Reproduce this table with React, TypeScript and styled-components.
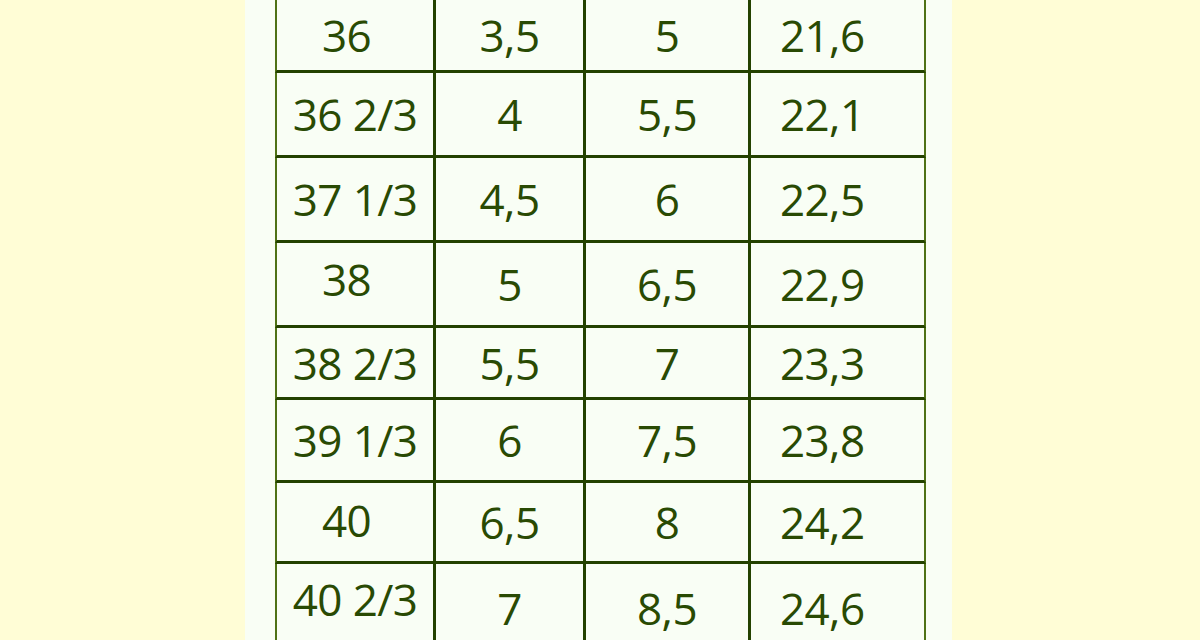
import React from "react";
import styled, { createGlobalStyle } from "styled-components";

const Global = createGlobalStyle`
  html, body { margin: 0; padding: 0; background: #fffdd6; }
  body { font-family: "Open Sans", "Noto Sans", sans-serif; }
`;

const Page = styled.div`
  height: 640px;
  overflow: hidden;
  display: flex;
  padding-left: 245px;
  box-sizing: border-box;
`;

const Sheet = styled.div`
  width: 707px;
  height: 640px;
  background: #f9fef5;
  padding-left: 30px;
  box-sizing: border-box;
`;

const Grid = styled.div`
  display: grid;
  grid-template-columns: 161px 150px 165px 175px;
  grid-template-rows: 73px 85px 85px 85px 72px 83px 81px 90px;
`;

const LINE = "#244200";
const EDGE = "#4f7216";

const Cell = styled.div<{ $col: number; $first?: boolean; $shift?: number; $lift?: number }>`
  box-sizing: border-box;
  display: flex;
  align-items: center;
  justify-content: ${(p) => (p.$col === 3 ? "flex-start" : "center")};
  padding-left: ${(p) => (p.$col === 3 ? "29px" : "0")};
  padding-right: ${(p) => (p.$shift ? `${p.$shift}px` : "0")};
  padding-bottom: ${(p) => (p.$lift ? `${p.$lift}px` : "0")};
  border-bottom: 3px solid ${LINE};
  border-right: ${(p) => (p.$col === 3 ? `2px solid ${EDGE}` : `3px solid ${LINE}`)};
  border-left: ${(p) => (p.$col === 0 ? `2px solid ${EDGE}` : "none")};
  color: #294a03;
  font-size: 44px;
  letter-spacing: -0.6px;
  line-height: 1;
  white-space: nowrap;
`;

type Row = { c: [string, string, string, string]; lift?: number };

const rows: Row[] = [
  { c: ["36", "3,5", "5", "21,6"] },
  { c: ["36 2/3", "4", "5,5", "22,1"] },
  { c: ["37 1/3", "4,5", "6", "22,5"] },
  { c: ["38", "5", "6,5", "22,9"], lift: 10 },
  { c: ["38 2/3", "5,5", "7", "23,3"] },
  { c: ["39 1/3", "6", "7,5", "23,8"] },
  { c: ["40", "6,5", "8", "24,2"], lift: 4 },
  { c: ["40 2/3", "7", "8,5", "24,6"], lift: 18 },
];

export default function App() {
  return (
    <>
      <Global />
      <Page>
        <Sheet>
          <Grid>
            {rows.map((r, ri) =>
              r.c.map((t, ci) => (
                <Cell
                  key={`${ri}-${ci}`}
                  $col={ci}
                  $shift={ci === 0 && !t.includes("/") ? 17 : 0}
                  $lift={ci === 0 ? r.lift : 0}
                >
                  {t}
                </Cell>
              ))
            )}
          </Grid>
        </Sheet>
      </Page>
    </>
  );
}
